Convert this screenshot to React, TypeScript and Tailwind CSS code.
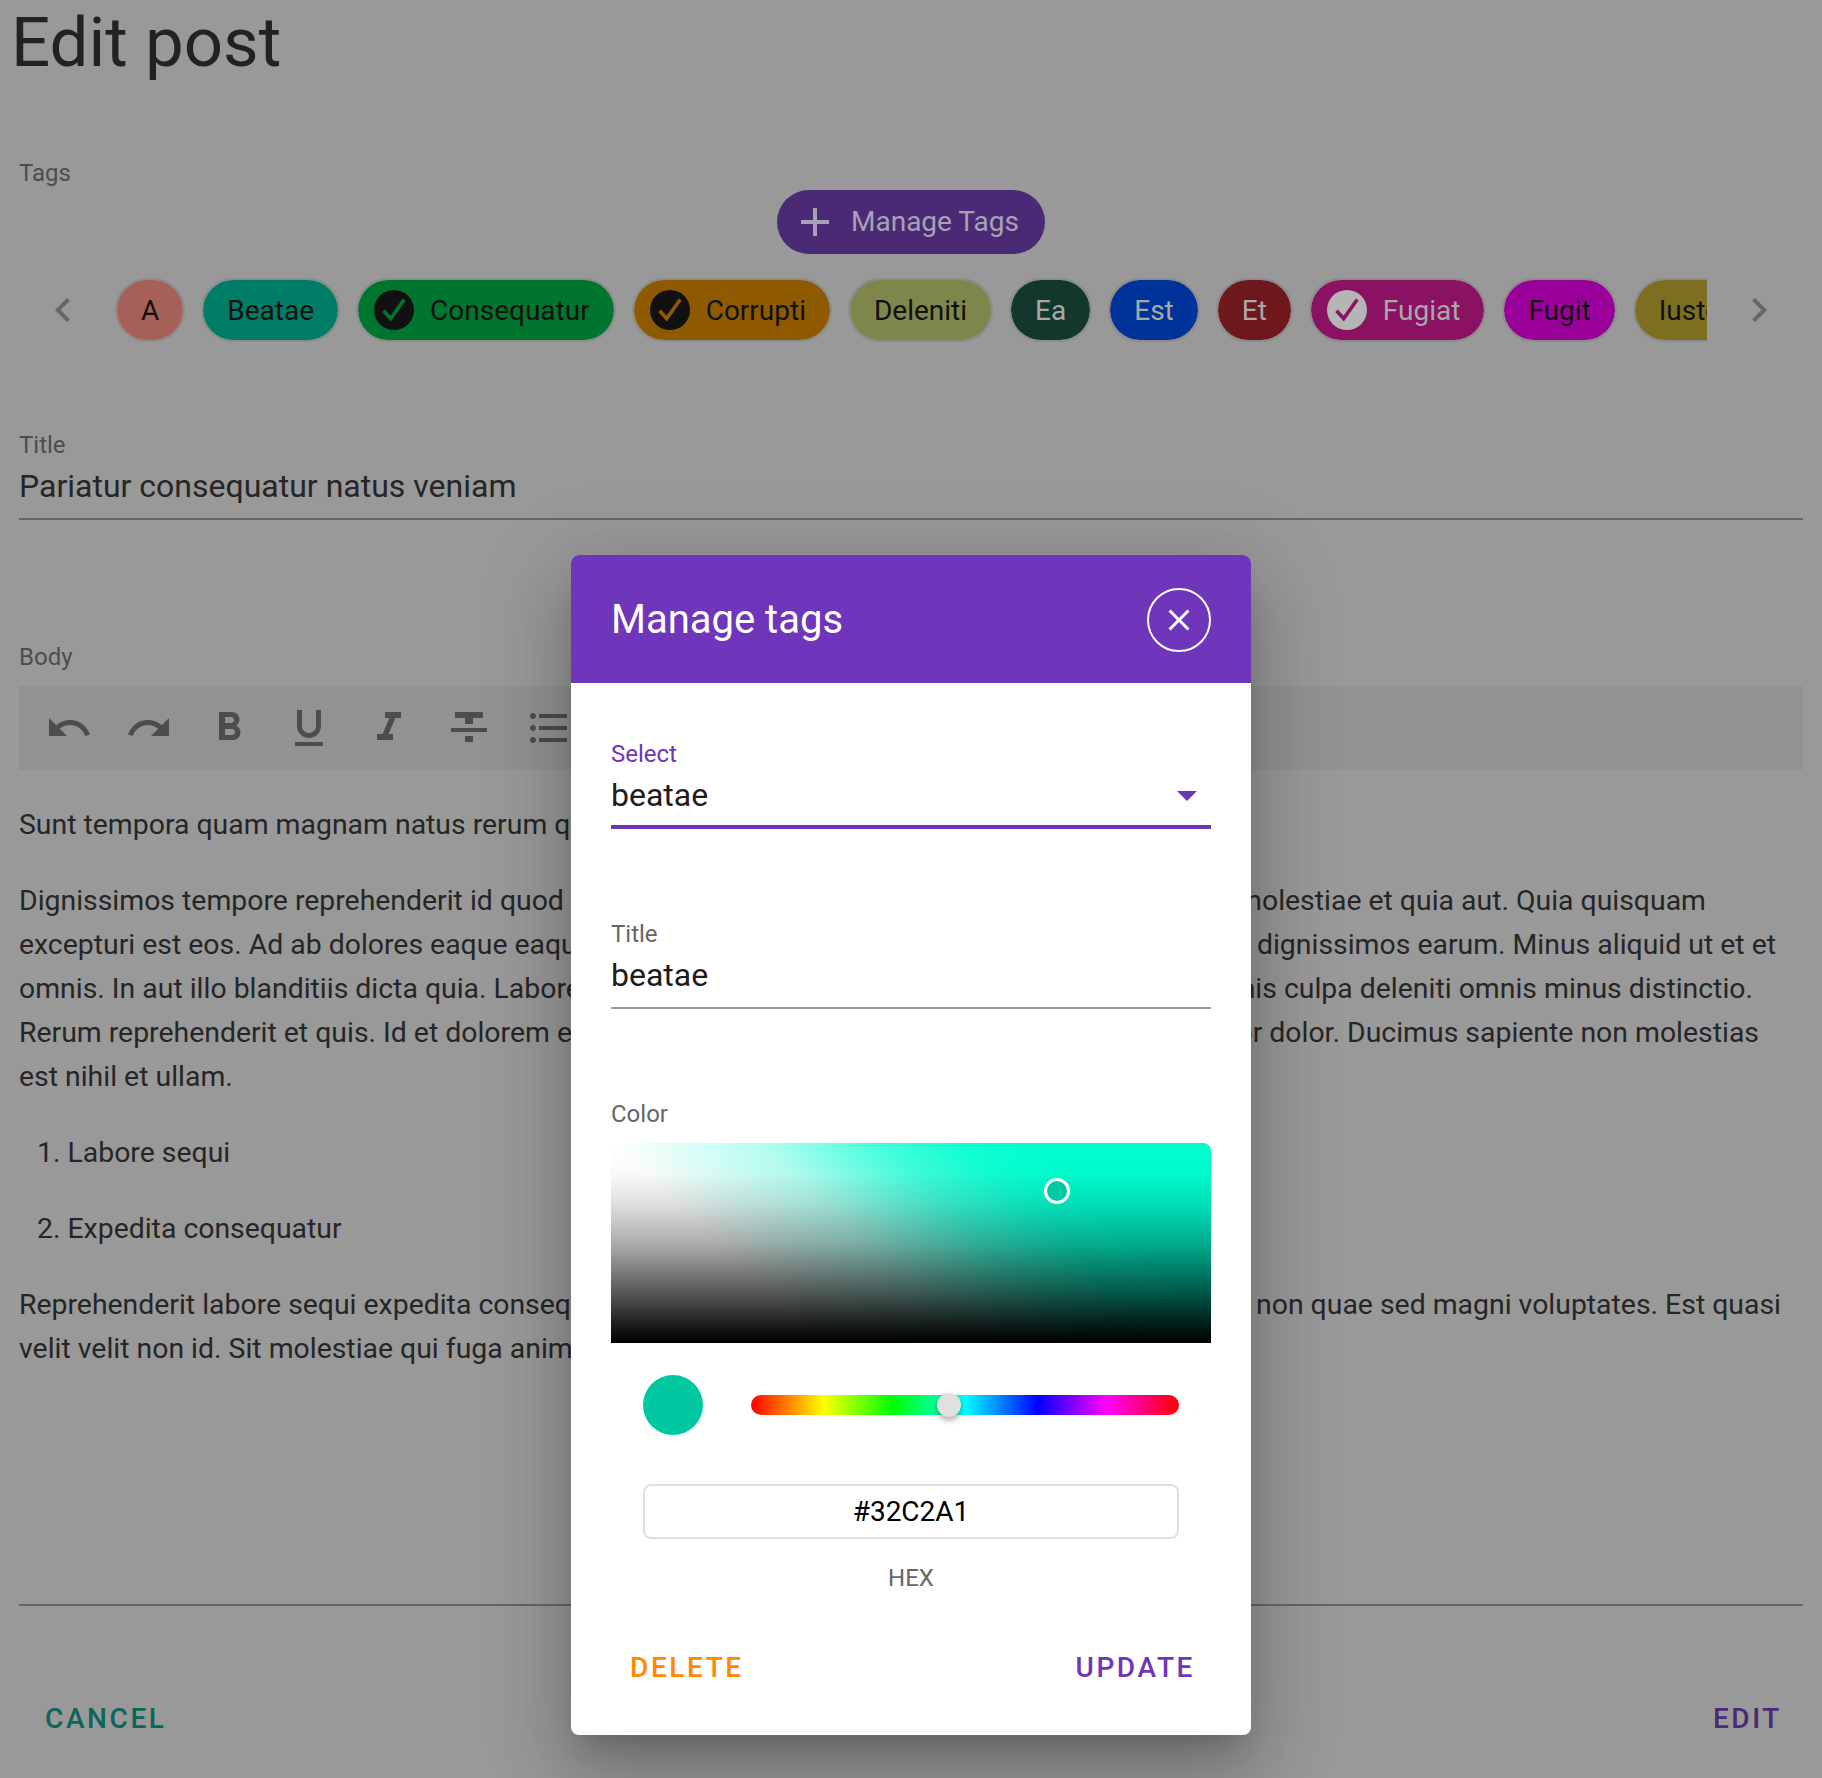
const paths = {
  undo: "M12.5 8c-2.65 0-5.05.99-6.9 2.6L2 7v9h9l-3.62-3.62c1.39-1.16 3.16-1.88 5.12-1.88 3.54 0 6.55 2.31 7.6 5.5l2.37-.78C21.08 11.03 17.15 8 12.5 8z",
  redo: "M18.4 10.6C16.55 8.99 14.15 8 11.5 8c-4.65 0-8.58 3.03-9.96 7.22L3.9 16c1.05-3.19 4.05-5.5 7.6-5.5 1.95 0 3.73.72 5.12 1.88L13 16h9V7l-3.6 3.6z",
  bold: "M15.6 10.79c.97-.67 1.65-1.77 1.65-2.79 0-2.26-1.75-4-4-4H7v14h7.04c2.09 0 3.71-1.7 3.71-3.79 0-1.52-.86-2.82-2.15-3.42zM10 6.5h3c.83 0 1.5.67 1.5 1.5s-.67 1.5-1.5 1.5h-3v-3zm3.5 9H10v-3h3.5c.83 0 1.5.67 1.5 1.5s-.67 1.5-1.5 1.5z",
  underline: "M12 17c3.31 0 6-2.69 6-6V3h-2.5v8c0 1.93-1.57 3.5-3.5 3.5S8.5 12.93 8.5 11V3H6v8c0 3.31 2.69 6 6 6zm-7 2v2h14v-2H5z",
  italic: "M10 4v3h2.21l-3.42 8H6v3h8v-3h-2.21l3.42-8H18V4z",
  strike: "M10 19h4v-3h-4v3zM5 4v3h5v3h4V7h5V4H5zM3 14h18v-2H3v2z",
  list: "M4 10.5c-.83 0-1.5.67-1.5 1.5s.67 1.5 1.5 1.5 1.5-.67 1.5-1.5-.67-1.5-1.5-1.5zm0-6c-.83 0-1.5.67-1.5 1.5S3.17 7.5 4 7.5 5.5 6.83 5.5 6 4.83 4.5 4 4.5zm0 12c-.83 0-1.5.68-1.5 1.5s.68 1.5 1.5 1.5 1.5-.68 1.5-1.5-.67-1.5-1.5-1.5zM7 19h14v-2H7v2zm0-6h14v-2H7v2zm0-8v2h14V5H7z",
  left: "M15.41 7.41L14 6l-6 6 6 6 1.41-1.41L10.83 12z",
  right: "M10 6L8.59 7.41 13.17 12l-4.58 4.58L10 18l6-6z",
  plus: "M19 13h-6v6h-2v-6H5v-2h6V5h2v6h6v2z",
  close: "M19 6.41L17.59 5 12 10.59 6.41 5 5 6.41 10.59 12 5 17.59 6.41 19 12 13.41 17.59 19 19 17.59 13.41 12z",
};

function Icon({ d, className }: { d: string; className?: string }) {
  return (
    <svg viewBox="0 0 24 24" fill="currentColor" className={className}>
      <path d={d} />
    </svg>
  );
}

const tags = [
  { name: "A", bg: "bg-[#a65f59]", text: "text-[#111]" },
  { name: "Beatae", bg: "bg-[#007d66]", text: "text-[#111]" },
  { name: "Consequatur", bg: "bg-[#00752f]", text: "text-[#111]", check: "dark" },
  { name: "Corrupti", bg: "bg-[#8f5900]", text: "text-[#111]", check: "dark" },
  { name: "Deleniti", bg: "bg-[#7e864b]", text: "text-[#111]" },
  { name: "Ea", bg: "bg-[#12382e]", text: "text-[#a8a8a8]" },
  { name: "Est", bg: "bg-[#003399]", text: "text-[#a8a8a8]" },
  { name: "Et", bg: "bg-[#6e171c]", text: "text-[#a8a8a8]" },
  { name: "Fugiat", bg: "bg-[#8b1263]", text: "text-[#a8a8a8]", check: "light" },
  { name: "Fugit", bg: "bg-[#99009a]", text: "text-[#111]" },
  { name: "Iusto", bg: "bg-[#7d6f20]", text: "text-[#111]" },
];

const checkColor: Record<string, string> = {
  Consequatur: "#00752f",
  Corrupti: "#8f5900",
  Fugiat: "#8b1263",
};

function Chip({ tag }: { tag: (typeof tags)[number] }) {
  return (
    <div
      className={`flex h-[60px] shrink-0 items-center rounded-[30px] outline-2 outline-[#8c8c8c] text-[28px] ${tag.bg} ${tag.text} ${
        tag.check ? "pl-4 pr-6 gap-4" : "px-6"
      }`}
    >
      {tag.check && (
        <span
          className={`flex h-10 w-10 items-center justify-center rounded-full ${
            tag.check === "dark" ? "bg-[#111]" : "bg-[#b5b5b5]"
          }`}
        >
          <svg viewBox="0 0 24 24" className="h-9 w-9" fill="none" stroke={checkColor[tag.name]} strokeWidth="2.4">
            <path d="M5 12.5l4.8 5.2L18.8 5" />
          </svg>
        </span>
      )}
      <span className="pt-px">{tag.name}</span>
    </div>
  );
}

// left part runs under the dialog, right part comes out the other side
function SplitLine({ left, right, mr }: { left: string; right: string; mr: string }) {
  return (
    <div className="flex justify-between whitespace-nowrap">
      <span>{left}</span>
      <span className={mr}>{right}</span>
    </div>
  );
}

function ManageTagsDialog() {
  return (
    <div className="absolute left-[571px] top-[555px] flex h-[1180px] w-[680px] flex-col overflow-hidden rounded-lg bg-white shadow-[0_20px_28px_-13px_rgba(0,0,0,0.2),0_44px_70px_6px_rgba(0,0,0,0.14),0_17px_85px_15px_rgba(0,0,0,0.12)]">
      <div className="flex h-[128px] shrink-0 items-center justify-between bg-[#6f35bb] pl-10 pr-10 pt-px text-white">
        <h2 className="pt-px text-[40px] leading-none">Manage tags</h2>
        <div className="flex h-16 w-16 items-center justify-center rounded-full border-2 border-white">
          <Icon d={paths.close} className="h-9 w-9" />
        </div>
      </div>

      <div className="flex flex-1 flex-col px-10 pt-[58px]">
        <div className="text-[24px] leading-[26px] text-[#6f35bb]">Select</div>
        <div className="mt-[6px] flex items-center justify-between border-b-4 border-[#6f35bb] pb-2 text-[32px] leading-[44px] text-[#1c1c1c]">
          <span>beatae</span>
          <span className="mr-[14px] mt-[2px] h-0 w-0 border-x-[10px] border-t-[10px] border-x-transparent border-t-[#6f35bb]" />
        </div>

        <div className="mt-[92px] text-[24px] leading-[26px] text-[#666]">Title</div>
        <div className="mt-[6px] border-b-2 border-[#999] pb-[10px] text-[32px] leading-[44px] text-[#1c1c1c]">
          beatae
        </div>

        <div className="mt-[92px] text-[24px] leading-[26px] text-[#666]">Color</div>
        <div className="relative mt-4 h-[200px] rounded-t-lg bg-[linear-gradient(to_top,#000_0%,rgba(0,0,0,0.88)_10%,rgba(0,0,0,0.66)_25%,rgba(0,0,0,0.32)_50%,rgba(0,0,0,0.12)_70%,rgba(0,0,0,0.02)_85%,transparent_100%),linear-gradient(45deg,#fff_25%,rgba(255,255,255,0.7)_44%,rgba(255,255,255,0.25)_59%,rgba(255,255,255,0.06)_69%,transparent_78%),linear-gradient(#00ffd0,#00ffd0)]">
          <span className="absolute left-[433px] top-[35px] h-[26px] w-[26px] rounded-full border-[3px] border-white bg-[#00c9a1]" />
        </div>

        <div className="mt-8 flex items-center pl-8">
          <span className="h-[60px] w-[60px] rounded-full bg-[#00c9a1]" />
          <div className="relative ml-12 h-5 w-[428px] rounded-full bg-[linear-gradient(to_right,#f00_0%,#ff0_17%,#0f0_33%,#0ff_50%,#00f_67%,#f0f_83%,#f00_100%)]">
            <span className="absolute left-[186px] top-[-2px] h-6 w-6 rounded-full bg-[#e0e0e0] shadow-[0_3px_6px_rgba(0,0,0,0.35)]" />
          </div>
        </div>

        <div className="mx-8 mt-[49px] flex h-[55px] items-center justify-center rounded-lg border-2 border-[#e0e0e0] text-[28px] text-black">
          #32C2A1
        </div>
        <div className="mt-[26px] text-center text-[24px] leading-[26px] text-[#666]">HEX</div>

        <div className="mt-[55px] flex items-center justify-between pl-[19px] pr-4 text-[28px] font-medium leading-[44px] tracking-[2.6px]">
          <span className="text-[#ff8800]">DELETE</span>
          <span className="text-[#6f35bb]">UPDATE</span>
        </div>
      </div>
    </div>
  );
}

export default function App() {
  const toolbar = [paths.undo, paths.redo, paths.bold, paths.underline, paths.italic, paths.strike, paths.list];

  return (
    <div className="relative h-[1778px] w-[1822px] overflow-hidden bg-[#999] font-['Roboto',sans-serif] text-[#262626]">
      <h1 className="pl-[11px] text-[69px] leading-[86px] text-[#222]">Edit post</h1>

      <div className="mt-[74px] px-[19px] text-[24px] leading-[26px] text-[#4d4d4d]">Tags</div>
      <div className="mt-1 flex justify-center">
        <div className="flex h-16 w-[268px] items-center gap-3 rounded-[32px] bg-[#4b2a75] pl-[14px] text-[28px] text-[#a8a0b4]">
          <Icon d={paths.plus} className="h-12 w-12" />
          <span>Manage Tags</span>
        </div>
      </div>

      <div className="mt-[26px] flex items-center pl-[39px]">
        <Icon d={paths.left} className="h-12 w-12 shrink-0 text-[#666]" />
        <div className="-my-[2px] ml-[27px] flex w-[1593px] gap-5 overflow-hidden py-[2px] pl-[3px]">
          {tags.map((t) => (
            <Chip key={t.name} tag={t} />
          ))}
        </div>
        <Icon d={paths.right} className="ml-[28px] h-12 w-12 shrink-0 text-[#666]" />
      </div>

      <div className="px-[19px]">
        <div className="mt-[92px] text-[24px] leading-[26px] text-[#4d4d4d]">Title</div>
        <div className="mt-[6px] border-b-2 border-[#666] pb-[10px] text-[32px] leading-[44px]">
          Pariatur consequatur natus veniam
        </div>

        <div className="mt-[124px] text-[24px] leading-[26px] text-[#4d4d4d]">Body</div>
        <div className="mt-4 flex h-[84px] items-center gap-8 bg-[#929292] pl-[26px] text-[#4d4d4d]">
          {toolbar.map((d) => (
            <Icon key={d} d={d} className="h-12 w-12" />
          ))}
        </div>

        <div className="mt-[33px] text-[28.4px] leading-[44px] whitespace-nowrap">Sunt tempora quam magnam natus rerum q</div>
        <div className="mt-8 text-[28.4px] leading-[44px]">
          <SplitLine left="Dignissimos tempore reprehenderit id quod" right="molestiae et quia aut. Quia quisquam" mr="mr-[97px]" />
          <SplitLine left="excepturi est eos. Ad ab dolores eaque eaqu" right="dignissimos earum. Minus aliquid ut et et" mr="mr-[27px]" />
          <SplitLine left="omnis. In aut illo blanditiis dicta quia. Labore" right="omnis culpa deleniti omnis minus distinctio." mr="mr-[50px]" />
          <SplitLine left="Rerum reprehenderit et quis. Id et dolorem e" right="tempor dolor. Ducimus sapiente non molestias" mr="mr-[44px]" />
          <div>est nihil et ullam.</div>
        </div>
        <ol className="text-[28.4px] leading-[44px]">
          <li className="mt-8 pl-[18px]">1. Labore sequi</li>
          <li className="mt-8 pl-[18px]">2. Expedita consequatur</li>
        </ol>
        <div className="mt-8 text-[28.4px] leading-[44px]">
          <SplitLine left="Reprehenderit labore sequi expedita conseq" right="non quae sed magni voluptates. Est quasi" mr="mr-[22px]" />
          <div>velit velit non id. Sit molestiae qui fuga anim</div>
        </div>

        <div className="mt-[233px] border-b-2 border-[#666]" />
        <div className="mt-[91px] flex justify-between pl-[26px] pr-[21px] text-[28px] font-medium leading-[44px] tracking-[2.6px]">
          <span className="text-[#0a6659]">CANCEL</span>
          <span className="text-[#4b2a75]">EDIT</span>
        </div>
      </div>

      <ManageTagsDialog />
    </div>
  );
}
